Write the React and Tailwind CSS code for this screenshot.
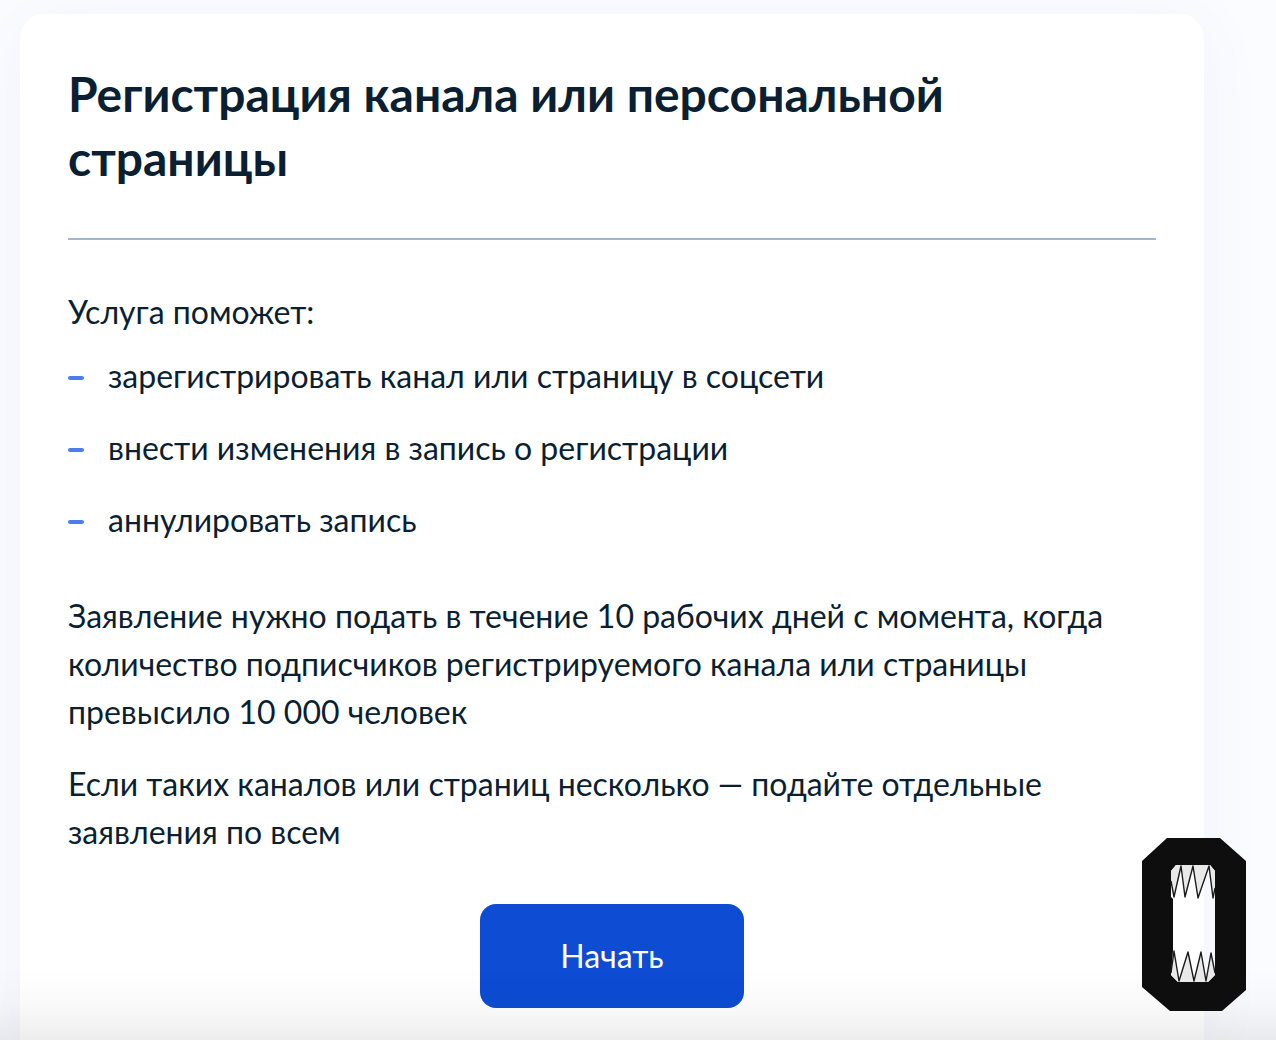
const steps = [
  'зарегистрировать канал или страницу в соцсети',
  'внести изменения в запись о регистрации',
  'аннулировать запись',
];

const Logo = () => (
  <svg viewBox="0 0 104 173" className="h-[173px] w-[104px]" aria-hidden="true">
    <path
      fill="#0e0e0f"
      fillRule="evenodd"
      d="M25 0H78L104 23V152L80 173H28L0 149V23ZM34 27L29 33V59L31 61V113L29 137L36 144H66L73 137V33L68 27Z"
    />
    {/* Upper and lower teeth */}
    <g fill="#e9e9ea" stroke="#1b1b1c" strokeWidth="1.4" strokeLinejoin="round">
      <path stroke="none" d="M34 27L29 33V43L32 59L39 28L43 59L51 28L56 60L67 28L71 60L73 50V33L68 27Z" />
      <path fill="none" d="M29 43L32 59L39 28L43 59L51 28L56 60L67 28L71 60L73 50" />
      <path stroke="none" d="M36 144L29 137L32 113L37 143L46 114L52 143L59 114L64 143L69 115L73 135V137L66 144Z" />
      <path fill="none" d="M29 135L32 113L37 143L46 114L52 143L59 114L64 143L69 115L73 135" />
    </g>
  </svg>
);

const App = () => {
  return (
    <div className="flex min-h-screen overflow-hidden bg-[#fbfcff] pt-3.5 pr-18 pl-5 font-[Lato,sans-serif] text-[#0b1f33]">
      <main className="flex-1 rounded-t-3xl bg-white px-12 pt-12 pb-8 shadow-[0_8px_64px_rgba(60,90,190,0.06)]">
        <h1 className="border-b-2 border-[#a0b6d6] pb-12 text-5xl leading-16 font-bold">
          Регистрация канала или персональной страницы
        </h1>
        <p className="mt-12 text-[32px] leading-12">Услуга поможет:</p>
        <ul className="mt-4 space-y-6 text-[32px] leading-12">
          {steps.map((step) => (
            <li key={step} className="flex items-center gap-6">
              <span className="mt-1 h-1 w-4 rounded-xs bg-[#4d7cf0]" />
              {step}
            </li>
          ))}
        </ul>
        <p className="mt-12 text-[32px] leading-12">
          Заявление нужно подать в течение 10 рабочих дней с момента, когда количество подписчиков
          регистрируемого канала или страницы превысило 10 000 человек
        </p>
        <p className="mt-6 text-[32px] leading-12">
          Если таких каналов или страниц несколько — подайте отдельные заявления по всем
        </p>
        <div className="mt-12 flex justify-center">
          <button type="button" className="h-26 w-66 rounded-2xl bg-[#0d4cd3] text-[32px] text-white">
            Начать
          </button>
        </div>
      </main>

      <div className="pointer-events-none fixed inset-x-0 bottom-0 h-18 bg-linear-to-t from-black/7 via-black/2 to-transparent" />
      <div className="fixed right-[30px] bottom-[29px]">
        <Logo />
      </div>
    </div>
  );
};

export default App;
